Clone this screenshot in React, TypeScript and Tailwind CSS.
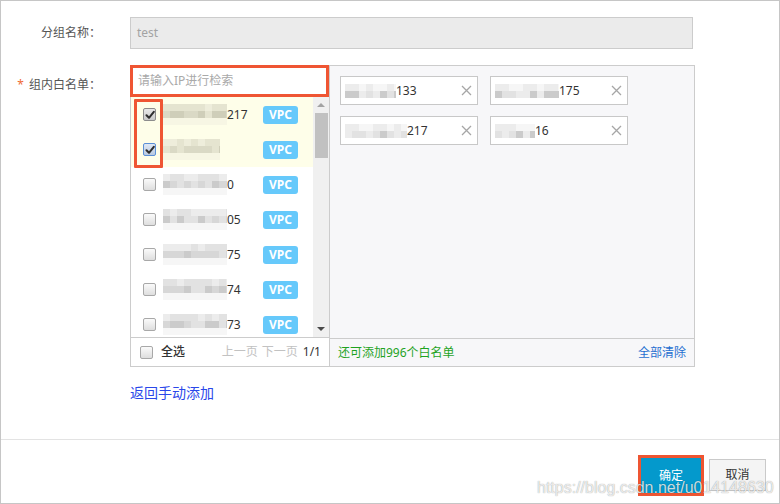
import React from "react";

const grayPal = ["#f6f6f6", "#ececec", "#e2e2e2", "#d7d7d7", "#cbcbcb"];
const yellowPal = ["#f7f6e4", "#eeeddb", "#e5e4d0", "#dad9c5", "#cfceb9"];

function shade(seed: number, r: number, c: number) {
  const v = Math.abs(Math.sin(seed * 12.9898 + r * 78.233 + c * 37.719) * 43758.5453);
  return v - Math.floor(v);
}

function Mosaic({ w, seed, yellow, rows = 3 }: { w: string; seed: number; yellow?: boolean; rows?: number }) {
  const pal = yellow ? yellowPal : grayPal;
  const cols = 10;
  return (
    <div className={`${w} flex flex-col overflow-hidden shrink-0`}>
      {Array.from({ length: rows }).map((_, r) => (
        <div key={r} className="flex">
          {Array.from({ length: cols }).map((_, c) => {
            const s = shade(seed, r, c);
            let idx: number;
            if (rows === 3) {
              if (r === 0) idx = s < 0.5 ? 1 : 2;
              else if (r === 1) idx = s < 0.3 ? 4 : s < 0.7 ? 3 : 2;
              else idx = 0;
            } else {
              if (r === 0) idx = s < 0.5 ? 0 : 1;
              else idx = s < 0.3 ? 4 : s < 0.7 ? 2 : 1;
            }
            return <div key={c} className="h-[7px] w-[7px] shrink-0" style={{ background: pal[idx] }} />;
          })}
        </div>
      ))}
    </div>
  );
}

function CheckBox({ checked, focus }: { checked?: boolean; focus?: boolean }) {
  const border = focus ? "border-[#5b8fd6]" : checked ? "border-[#8c8c8c]" : "border-[#a8a8a8]";
  const bg = checked
    ? focus
      ? "bg-[linear-gradient(#dfe8f5,#b9c9e0)]"
      : "bg-[linear-gradient(#e8e8e8,#c9c9c9)]"
    : "bg-[linear-gradient(#fafafa,#dedede)]";
  return (
    <div className={`w-[13px] h-[13px] rounded-[2px] border ${border} ${bg} flex items-center justify-center shrink-0`}>
      {checked && (
        <svg width="10" height="10" viewBox="0 0 10 10">
          <path d="M1.5 5.2 L4 7.8 L8.8 1.8" fill="none" stroke="#2e2e2e" strokeWidth="2" strokeLinecap="round" strokeLinejoin="round" />
        </svg>
      )}
    </div>
  );
}

function Badge() {
  return (
    <div className="w-[35px] h-[18px] rounded-[3px] bg-[#66c9fb] text-white text-[12px] font-bold flex items-center justify-center leading-none shrink-0">
      VPC
    </div>
  );
}

const rows = [
  { num: "217", w: "w-[64px]", checked: true, yellow: true },
  { num: "", w: "w-[57px]", checked: true, focus: true, yellow: true },
  { num: "0", w: "w-[64px]" },
  { num: "05", w: "w-[64px]" },
  { num: "75", w: "w-[64px]" },
  { num: "74", w: "w-[64px]" },
  { num: "73", w: "w-[64px]" },
];

const tags = [
  { num: "133", w: "w-[51px]" },
  { num: "175", w: "w-[64px]" },
  { num: "217", w: "w-[62px]" },
  { num: "16", w: "w-[40px]" },
];

function XIcon() {
  return (
    <svg width="11" height="11" viewBox="0 0 11 11" className="shrink-0">
      <path d="M1 1 L10 10 M10 1 L1 10" stroke="#a6a6a6" strokeWidth="1.3" />
    </svg>
  );
}

export default function App() {
  return (
    <div className="relative w-[780px] h-[504px] bg-white border border-[#c6c6c6] flex flex-col overflow-hidden font-['Noto_Sans','Noto_Sans_CJK_SC',sans-serif] text-[#333]">
      <div className="flex-1 flex flex-col">
        {/* 分组名称 */}
        <div className="flex items-center mt-[16px]">
          <div className="w-[100px] text-right text-[12px] text-[#555]">分组名称：</div>
          <div className="ml-[29px] w-[563px] h-[32px] bg-[#ebebeb] border border-[#cccccc] flex items-center pl-[6px] text-[12px] text-[#a3a3a3]">
            test
          </div>
        </div>

        {/* 组内白名单 */}
        <div className="flex mt-[16px]">
          <div className="w-[100px] text-right text-[12px] text-[#555] pt-[11px] leading-[17px]">
            <span className="text-[#f06a35] mr-[5px]">*</span>组内白名单：
          </div>
          <div className="ml-[29px] flex">
            {/* left column */}
            <div className="w-[199px] flex flex-col">
              <div className="h-[32px] border-[3px] border-[#ef5533] bg-white flex items-center pl-[5px] text-[12px] text-[#a9a9a9]">
                请输入IP进行检索
              </div>
              <div className="border-l border-b border-[#cccccc] flex flex-col">
                <div className="flex h-[240px]">
                  <div className="relative flex-1 overflow-hidden flex flex-col">
                    {rows.map((r, i) => (
                      <div
                        key={i}
                        className={`h-[35px] shrink-0 flex items-center pl-[12px] ${r.yellow ? "bg-[#fefee9]" : "bg-white"}`}
                      >
                        <CheckBox checked={r.checked} focus={r.focus} />
                        <div className="ml-[7px] w-[100px] flex items-center">
                          <Mosaic w={r.w} seed={i + 3} yellow={r.yellow} />
                          <span className="text-[12px] text-[#333]">{r.num}</span>
                        </div>
                        <Badge />
                      </div>
                    ))}
                    <div className="absolute left-[3px] top-[2px] w-[29px] h-[69px] border-[3px] border-[#ef5533] rounded-[1px]" />
                  </div>
                  {/* scrollbar */}
                  <div className="w-[16px] bg-[#f0f0f0] flex flex-col items-center">
                    <div className="h-[16px] flex items-center justify-center">
                      <div className="w-0 h-0 border-l-[4px] border-r-[4px] border-b-[4px] border-l-transparent border-r-transparent border-b-[#a3a3a3]" />
                    </div>
                    <div className="w-[13px] h-[45px] bg-[#c1c1c1]" />
                    <div className="flex-1" />
                    <div className="h-[17px] flex items-center justify-center">
                      <div className="w-0 h-0 border-l-[4px] border-r-[4px] border-t-[4px] border-l-transparent border-r-transparent border-t-[#4a4a4a]" />
                    </div>
                  </div>
                </div>
                <div className="h-[29px] border-t border-[#cccccc] flex items-center pl-[9px] pr-[8px] text-[12px]">
                  <CheckBox />
                  <span className="ml-[8px] text-[#333] font-medium">全选</span>
                  <span className="ml-auto text-[#c2c2c2]">上一页</span>
                  <span className="ml-[4px] text-[#c2c2c2]">下一页</span>
                  <span className="ml-[5px] text-[#333]">1/1</span>
                </div>
              </div>
            </div>

            {/* right column */}
            <div className="w-[366px] h-[302px] border border-[#cccccc] bg-[#f7f7f9] flex flex-col">
              <div className="flex-1 pt-[10px] pl-[10px]">
                <div className="grid grid-cols-[138px_138px] gap-x-[12px] gap-y-[11px]">
                  {tags.map((t, i) => (
                    <div key={i} className="h-[29px] border border-[#c8c8c8] bg-white flex items-center pl-[4px] pr-[5px]">
                      <Mosaic w={t.w} seed={i + 20} rows={2} />
                      <span className="text-[12px] text-[#333]">{t.num}</span>
                      <div className="ml-auto">
                        <XIcon />
                      </div>
                    </div>
                  ))}
                </div>
              </div>
              <div className="h-[28px] border-t border-[#cccccc] flex items-center justify-between px-[8px] text-[12px]">
                <span className="text-[#1fa31f]">还可添加996个白名单</span>
                <span className="text-[#1f6fd0]">全部清除</span>
              </div>
            </div>
          </div>
        </div>

        {/* back link */}
        <div className="mt-[16px] ml-[129px] text-[14px] leading-[20px] text-[#2a47ea]">返回手动添加</div>
      </div>

      {/* footer */}
      <div className="h-[64px] border-t border-[#e3e3e3] flex justify-end items-start pt-[15px] pr-[13px]">
        <div className="w-[66px] h-[41px] border-[3px] border-[#ee5532] bg-[#0499cc] flex items-center justify-center text-[12px] text-white">
          确定
        </div>
        <div className="ml-[5px] mt-[4px] w-[57px] h-[32px] border border-[#cacaca] bg-[#f4f4f4] flex items-center justify-center text-[12px] text-[#333]">
          取消
        </div>
      </div>

      {/* watermark */}
      <div className="absolute left-[536px] top-[475px] text-[16px] font-['Liberation_Sans',sans-serif] text-[rgba(255,255,255,0.8)] [text-shadow:0_0_1px_rgba(0,0,0,0.45)] pointer-events-none whitespace-nowrap">
        https://blog.csdn.net/u014148630
      </div>
    </div>
  );
}
